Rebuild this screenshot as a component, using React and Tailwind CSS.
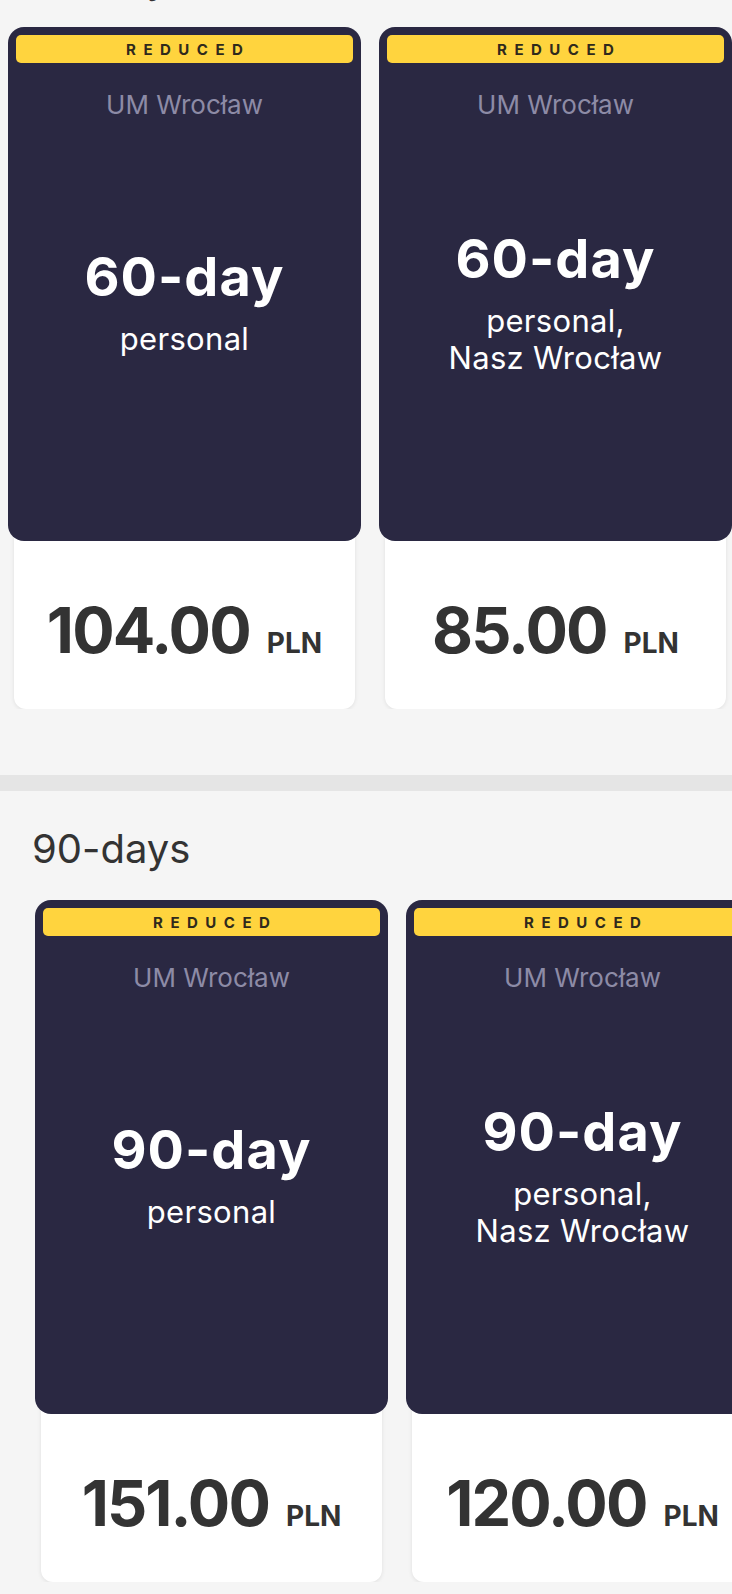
import React from "react";

const sections = [
  {
    heading: "60-days",
    headingClass: "-mt-[45px] mb-[24px]",
    rowClass: "pl-[8px]",
    cards: [
      { title: "60-day", sub: ["personal"], price: "104.00" },
      { title: "60-day", sub: ["personal,", "Nasz Wrocław"], price: "85.00" },
    ],
  },
  {
    heading: "90-days",
    headingClass: "mt-[34px] mb-[27px]",
    rowClass: "pl-[35px]",
    cards: [
      { title: "90-day", sub: ["personal"], price: "151.00" },
      { title: "90-day", sub: ["personal,", "Nasz Wrocław"], price: "120.00" },
    ],
  },
];

function Card({ card }) {
  return (
    <div className="shrink-0 w-[341px] mx-[6px] rounded-[12px] bg-white shadow-[0_1px_4px_rgba(0,0,0,0.09)]">
      <div className="-mx-[6px] h-[514px] rounded-[16px] bg-[#2a2842] flex flex-col pt-[8px] px-[8px] pb-[57px]">
        <div className="h-[28px] rounded-[5px] bg-[#ffd43e] flex items-center justify-center">
          <span className="text-[15px] font-bold tracking-[0.5em] pl-[0.5em] text-[#2f2a1c] leading-none">
            REDUCED
          </span>
        </div>
        <div className="mt-[27px] text-center text-[26px] leading-[30px] text-[#8d8ba6]">
          UM Wrocław
        </div>
        <div className="flex-1 flex flex-col items-center justify-center text-white text-center">
          <div className="text-[54px] font-bold leading-[60px] tracking-[0.02em]">{card.title}</div>
          <div className="mt-[13px] text-[31px] leading-[37px] tracking-[0.01em]">
            {card.sub.map((s, i) => (
              <div key={i}>{s}</div>
            ))}
          </div>
        </div>
      </div>
      <div className="h-[168px] pt-[10px] flex items-center justify-center">
        <div className="flex items-baseline text-[#333333] font-bold">
          <span className="text-[63px] leading-[63px] tracking-[-0.03em]">{card.price}</span>
          <span className="ml-[17px] text-[28px] leading-[28px]">PLN</span>
        </div>
      </div>
    </div>
  );
}

export default function App() {
  return (
    <div
      className="w-[732px] h-[1594px] overflow-hidden bg-[#f5f5f5]"
      style={{ fontFamily: "Inter, 'Noto Sans', sans-serif" }}
    >
      {sections.map((sec, si) => (
        <div key={si}>
          {si > 0 && <div className="h-[16px] bg-[#e5e5e5]" />}
          <div className={`${sec.headingClass} pl-[32px] text-[40px] leading-[48px] text-[#333333]`}>
            {sec.heading}
          </div>
          <div className={`flex gap-[18px] overflow-hidden ${sec.rowClass}`}>
            {sec.cards.map((c, ci) => (
              <Card key={ci} card={c} />
            ))}
          </div>
          {si === 0 && <div className="h-[66px]" />}
        </div>
      ))}
    </div>
  );
}
